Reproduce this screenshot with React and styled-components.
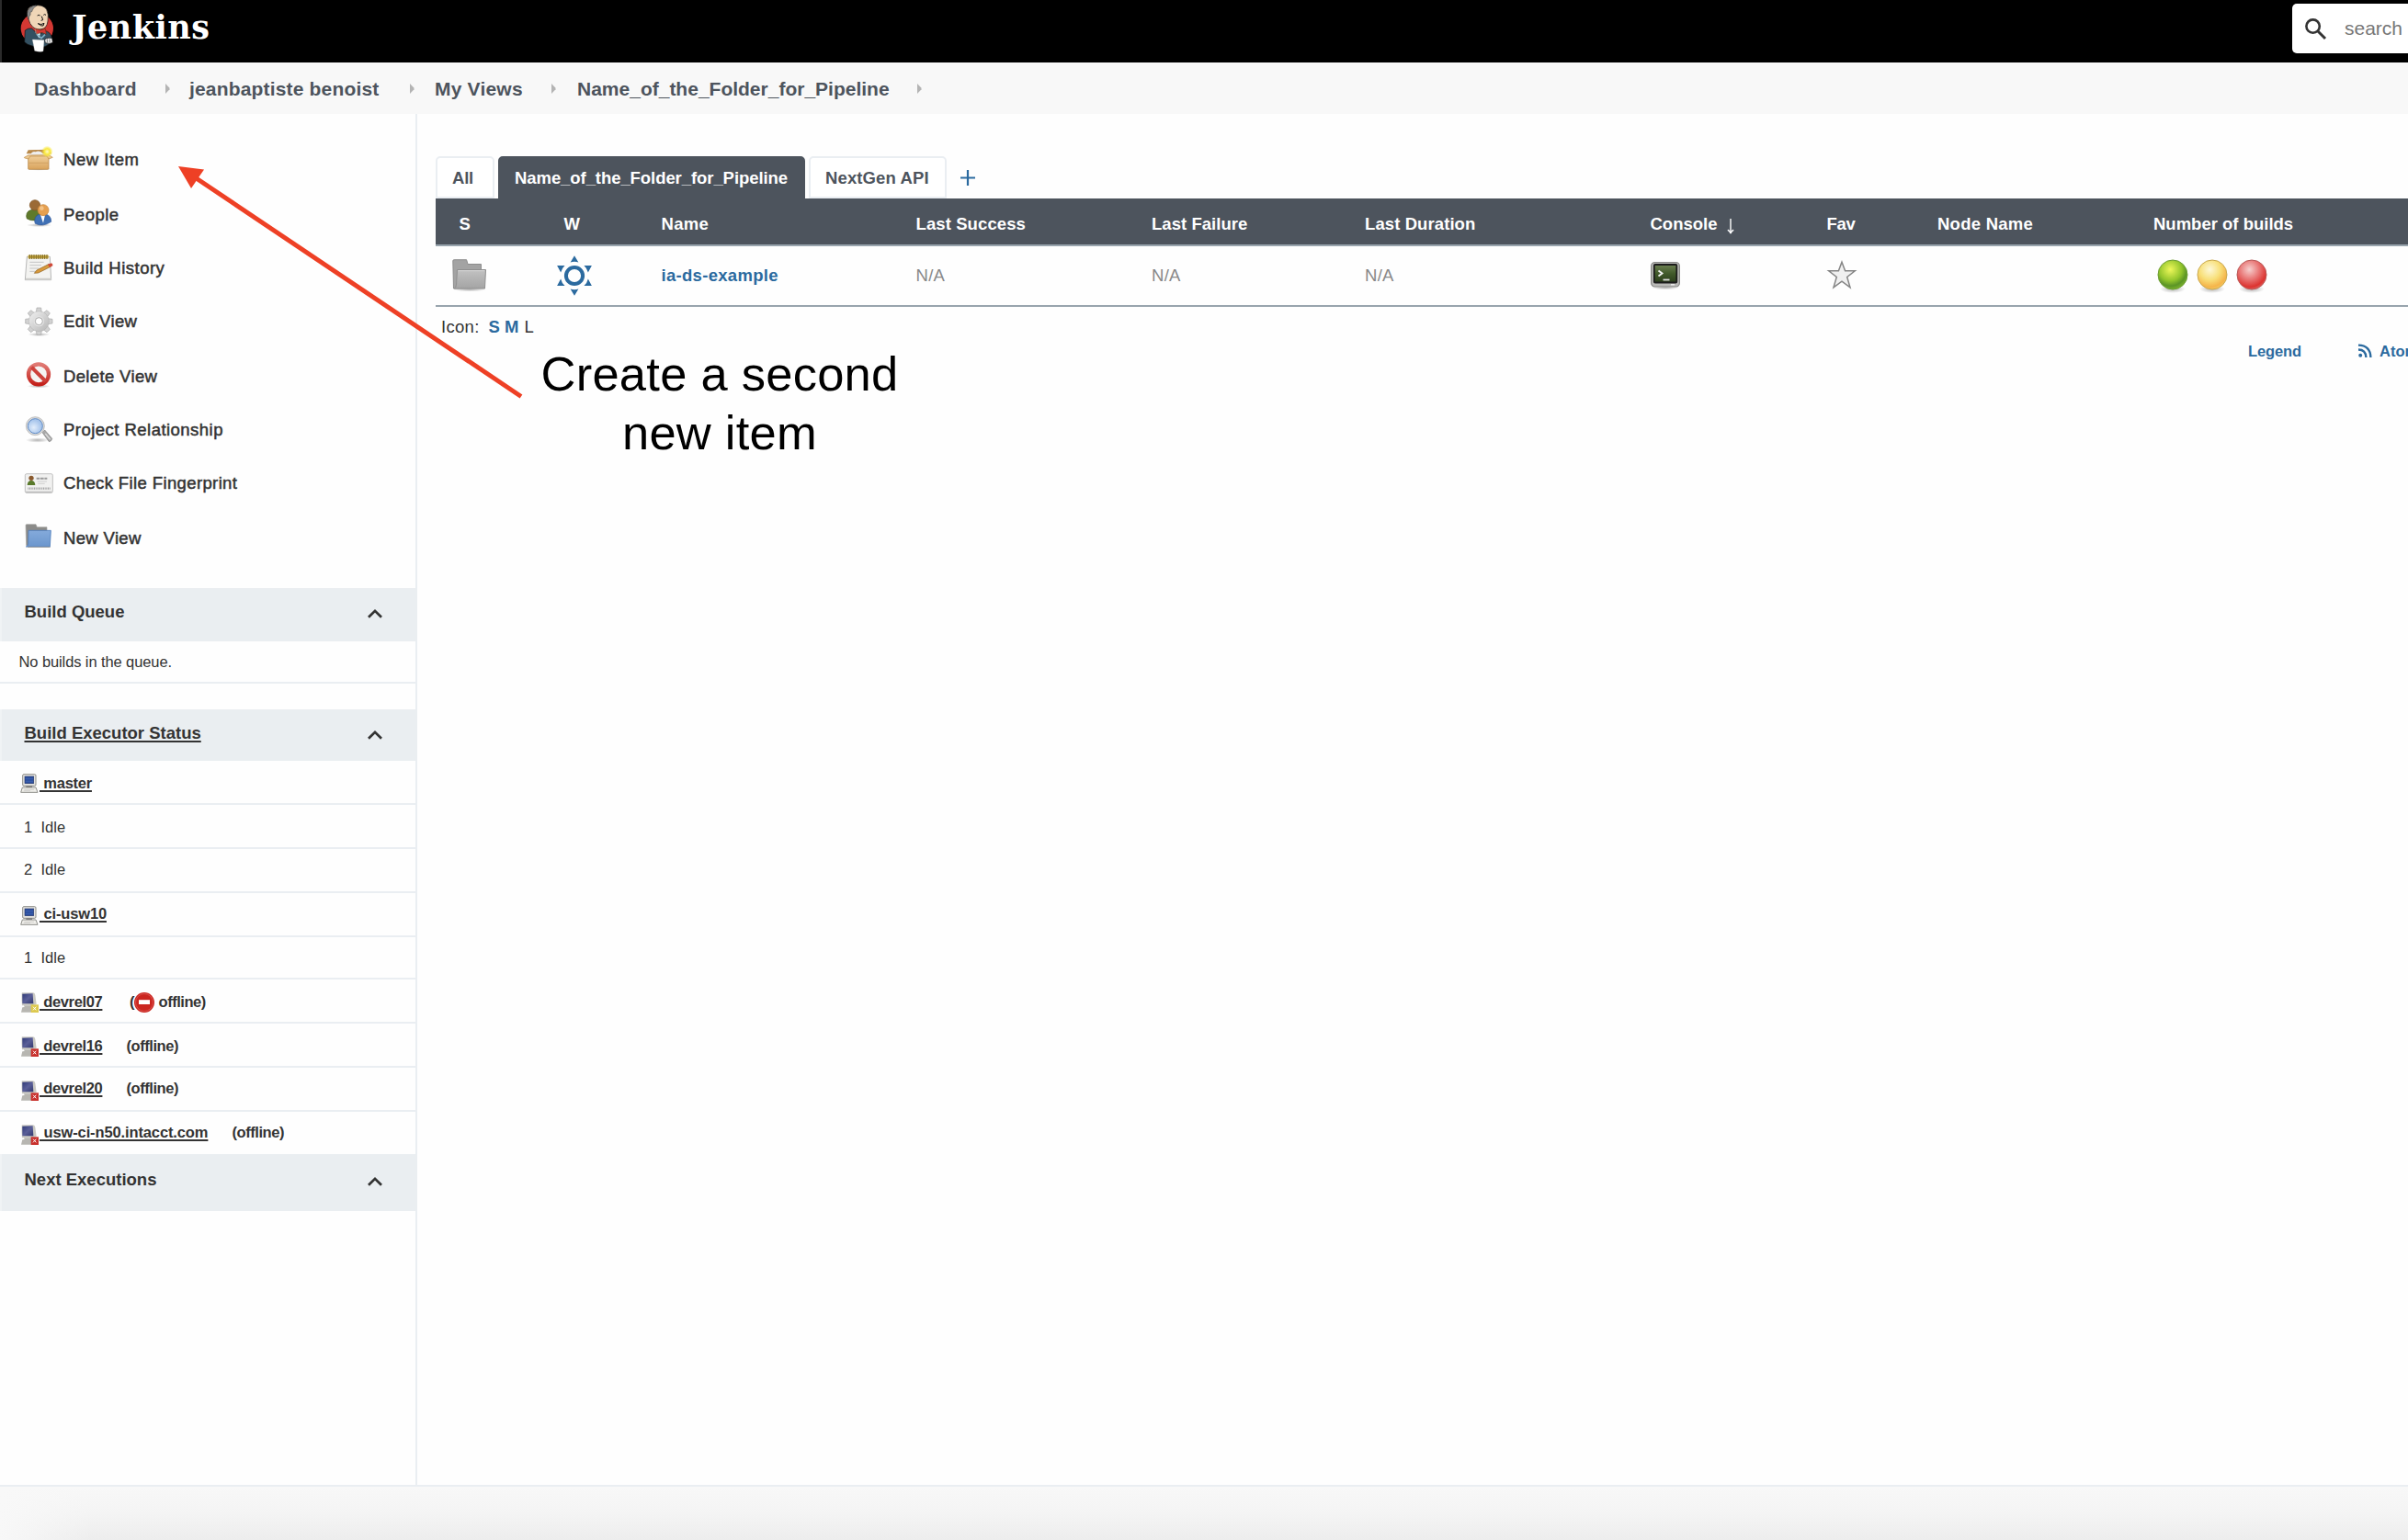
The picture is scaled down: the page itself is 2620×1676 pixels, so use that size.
import React from 'react';
import styled, { createGlobalStyle } from 'styled-components';

const sans = '"Liberation Sans", Arial, sans-serif';
const ink = '#333333';
const slate = '#4d545d';
const link = '#2b6a9f';
const line = '#eaeef2';
const panel = '#eaeef1';
const rule = '#98a4ad';

const Global = createGlobalStyle`
  html, body { margin: 0; background: #fefefe; }
  body { overflow: hidden; font-family: ${sans}; color: ${ink}; }
  * { box-sizing: border-box; }
  svg { display: block; flex: none; overflow: visible; }
`;

const Page = styled.div`
  position: relative;
  width: 2620px;
  height: 1676px;
  overflow: hidden;
  display: flex;
  flex-direction: column;
  background: #fefefe;
`;
const Header = styled.header`
  height: 68px;
  flex: none;
  display: flex;
  justify-content: space-between;
  background: #000;
  border-left: 2px solid #2b2b2b;
`;
const Brand = styled.div`
  display: flex;
  padding: 5px 0 0 20px;
  gap: 18px;
`;
const BrandName = styled.span`
  padding-top: 5px;
  font: bold 35px/40px "DejaVu Serif", serif;
  letter-spacing: ${p => p.$ls || 0}px;
  color: #fff;
`;
const Search = styled.div`
  width: 126px;
  height: 54px;
  margin-top: 4px;
  padding: 16px 0 0 14px;
  display: flex;
  gap: 20px;
  background: #fff;
  border-radius: 5px 0 0 5px;
`;
const SearchText = styled.span`
  font-size: 21px;
  line-height: 22px;
  color: #777;
`;
const Crumbs = styled.nav`
  height: 56px;
  flex: none;
  display: flex;
  align-items: flex-start;
  padding: 17px 0 0 37px;
  background: #f8f8f8;
`;
const Crumb = styled.span`
  width: ${p => p.$w}px;
  flex: none;
  white-space: nowrap;
  font-weight: bold;
  font-size: 21px;
  line-height: 24px;
  letter-spacing: ${p => p.$ls || 0}px;
  color: ${slate};
`;
const CrumbMark = styled.span`
  width: ${p => p.$w}px;
  flex: none;
  padding-top: 6px;
`;
const Body = styled.div`
  flex: 1;
  display: flex;
  min-height: 0;
`;
const Side = styled.aside`
  width: 454px;
  flex: none;
  border-right: 2px solid ${line};
`;
const Tasks = styled.div`
  height: 516px;
  padding: 34px 0 0 26px;
`;
const Task = styled.div`
  height: ${p => p.$h}px;
  display: flex;
  gap: 11px;
`;
const TaskLabel = styled.span`
  padding-top: ${p => p.$drop}px;
  font-size: 18.5px;
  line-height: 20px;
  letter-spacing: ${p => p.$ls || 0}px;
  -webkit-text-stroke: 0.5px ${ink};
  white-space: nowrap;
`;
const PaneHead = styled.div`
  width: 454px;
  height: ${p => p.$h}px;
  padding: ${p => p.$pt}px 38px 0 24.5px;
  display: flex;
  justify-content: space-between;
  align-items: flex-start;
  background: ${panel};
  border-left: 2px solid #f0f3f5;
`;
const PaneTitle = styled.span`
  font-weight: bold;
  font-size: 18.5px;
  line-height: 20px;
  text-decoration: ${p => (p.$u ? 'underline' : 'none')};
  text-decoration-thickness: 2px;
  text-underline-offset: 2px;
`;
const Chevron = styled.span`
  padding-top: 7px;
`;
const Row = styled.div`
  height: ${p => p.$h}px;
  padding-left: ${p => p.$pl || 22}px;
  display: flex;
  border-bottom: ${p => (p.$last ? 'none' : `2px solid ${line}`)};
`;
const RowText = styled.span`
  width: ${p => (p.$w ? `${p.$w}px` : 'auto')};
  margin-left: ${p => p.$ml || 0}px;
  padding-top: ${p => p.$drop}px;
  font-size: 16.5px;
  line-height: 20px;
  letter-spacing: ${p => p.$ls || 0}px;
  font-weight: ${p => (p.$b ? 'bold' : 'normal')};
  white-space: pre;
`;
const NodeLink = styled.a`
  color: ${ink};
  text-decoration: underline;
  text-decoration-thickness: 2px;
  text-underline-offset: 2px;
`;
const RowIcon = styled.span`
  width: 21px;
  flex: none;
  padding-top: 14px;
`;
const Gap = styled.div`
  height: 28px;
`;
const Main = styled.main`
  flex: 1;
  min-width: 0;
  padding: 46px 0 0 20px;
`;
const Tabs = styled.div`
  height: 46px;
  display: flex;
  gap: 4px;
`;
const Tab = styled.div`
  width: ${p => p.$w}px;
  padding: 12px 0 0 16px;
  border: 2px solid ${p => (p.$on ? slate : line)};
  border-radius: 5px 5px 0 0;
  background: ${p => (p.$on ? slate : '#fff')};
  color: ${p => (p.$on ? '#fff' : slate)};
  font-weight: bold;
  font-size: 18.5px;
  line-height: 20px;
  letter-spacing: ${p => p.$ls || 0}px;
  white-space: nowrap;
`;
const AddTab = styled.div`
  padding: 15px 0 0 11px;
`;
const Grid = styled.div`
  display: grid;
  grid-template-columns: 123px 122.500px 277px 256.500px 232px 310.500px 192px 120.500px 235px 1fr;
`;
const HeadRow = styled(Grid)`
  height: 52px;
  padding-top: 18px;
  background: ${slate};
  border-bottom: 2px solid ${rule};
  color: #fff;
  font-weight: bold;
`;
const DataRow = styled(Grid)`
  height: 66px;
  border-bottom: 2px solid ${rule};
`;
const Cell = styled.div`
  display: flex;
  padding-left: ${p => p.$pl || 0}px;
  padding-top: ${p => p.$pt || 0}px;
  gap: ${p => p.$gap || 0}px;
  font-size: 18.5px;
  line-height: 20px;
  letter-spacing: ${p => p.$ls || 0}px;
  font-weight: ${p => (p.$b ? 'bold' : 'inherit')};
  color: ${p => p.$c || 'inherit'};
  white-space: nowrap;
`;
const SortMark = styled.span`
  padding-top: 4px;
`;
const IconSizes = styled.div`
  height: 37px;
  padding: 12px 0 0 6px;
  display: flex;
  font-size: 18.5px;
  line-height: 20px;
`;
const SizeLabel = styled.span`
  width: ${p => p.$w}px;
  letter-spacing: ${p => p.$ls || 0}px;
  font-weight: ${p => (p.$on ? 'bold' : 'normal')};
  color: ${p => (p.$on ? link : ink)};
`;
const Feeds = styled.div`
  display: flex;
  padding: 1px 0 0 1972px;
  font-weight: bold;
  font-size: 16.5px;
  line-height: 20px;
  color: ${link};
`;
const FeedText = styled.span`
  width: ${p => p.$w}px;
  flex: none;
  letter-spacing: ${p => p.$ls || 0}px;
`;
const FeedIcon = styled.span`
  width: 23px;
  flex: none;
  padding-top: 2px;
`;
const Footer = styled.footer`
  height: 60px;
  flex: none;
  border-top: 2px solid ${line};
  background: linear-gradient(to right, #f8f8f8 0, rgba(248, 248, 248, 0) 100px),
    linear-gradient(#f8f8f8, #f4f4f4 50%, #ededed);
`;
const Note = styled.div`
  position: absolute;
  left: 563px;
  top: 375px;
  width: 440px;
  text-align: center;
  color: #000;
  font-size: 52.500px;
  line-height: 64px;
  letter-spacing: 0.25px;
`;
const Arrow = styled.svg`
  position: absolute;
  left: 0;
  top: 0;
`;
const Paints = styled.svg`
  position: absolute;
`;

const Butler = () => (
  <svg width="38" height="54" viewBox="66 14 114 162">
    <ellipse cx="121" cy="92" rx="53" ry="50" fill="#d33833" />
    <path d="M82 98q10-8 22-6l14 14 16 2 14-8q14 2 20 18l4 16-20 14-8 4-36-2-18-6-10-8z" fill="#335061" stroke="#111" strokeWidth="2" />
    <path d="M90 44q-4-22 20-26 30-6 42 12 8 16 4 38-3 24-21 26-16 4-27-6-12-12-14-24z" fill="#f0d6b7" stroke="#111" strokeWidth="2" />
    <path d="M92 62q-8-22 4-36 14-12 24-9-14 8-16 20l-5 2q2 12-3 12z" fill="#8c8c8c" stroke="#333" strokeWidth="1.500" />
    <path d="M122 50q5-4 9 0M142 48q4-4 8 0M136 52l4 12-6 2M124 76q10 6 20-1l-3 8q-8 1-11-3z" fill="none" stroke="#111" strokeWidth="3" />
    <path d="M116 94l16 10-4 20-12-18z" fill="#fff" />
    <path d="M117 92l15 6 16-6 3 19-16-6-16 6z" fill="#d33833" stroke="#531" strokeWidth="1.500" />
    <path d="M120 110l15 14 12-12" fill="none" stroke="#81b0c4" strokeWidth="5" />
    <path d="M106 128l38 2-3 36q-12 4-28-1z" fill="#fff" stroke="#ccc" strokeWidth="1" />
    <path d="M146 128q8-8 24-4l2 14q-8 6-24 1z" fill="#eee" stroke="#111" strokeWidth="2" />
    <path d="M154 126v12M162 126v12" stroke="#444" strokeWidth="2" />
  </svg>
);
const SearchIcon = () => (
  <svg width="23" height="23" viewBox="0 0 23 23" fill="none" stroke="#333" strokeWidth="2.600">
    <circle cx="8.600" cy="8.600" r="7.200" />
    <path d="M14 14l8 8" strokeWidth="3" />
  </svg>
);
const Mark = () => (
  <svg width="5" height="11" viewBox="0 0 5 11"><path d="M0 0l4.500 4.700v1.600L0 11z" fill="#b4b4b4" /></svg>
);
const Up = () => (
  <svg width="16" height="10" viewBox="0 0 16 10"><path d="M1 8.800L8 1.800l7 7" fill="none" stroke="#333" strokeWidth="2.700" /></svg>
);

const Defs = () => (
  <Paints width="0" height="0">
    <defs>
      <linearGradient id="box" x2="0" y2="1"><stop stopColor="#f0cf9b" /><stop offset="1" stopColor="#d9a35c" /></linearGradient>
      <linearGradient id="gray" x2="1" y2="1"><stop stopColor="#f2f2f2" /><stop offset="1" stopColor="#b5b5b5" /></linearGradient>
      <linearGradient id="fold" x2="0" y2="1"><stop stopColor="#c2c2c2" /><stop offset="1" stopColor="#a4a4a4" /></linearGradient>
      <linearGradient id="blue" x2="0" y2="1"><stop stopColor="#84aadb" /><stop offset="1" stopColor="#6b96cd" /></linearGradient>
      <linearGradient id="red" x2="0" y2="1"><stop stopColor="#e07a74" /><stop offset="1" stopColor="#c4211b" /></linearGradient>
      <linearGradient id="scr" x2="1" y2="1"><stop stopColor="#2f3a78" /><stop offset=".5" stopColor="#5a5f98" /><stop offset="1" stopColor="#32386e" /></linearGradient>
      <linearGradient id="term" x2="0" y2="1"><stop stopColor="#6d8052" /><stop offset=".5" stopColor="#415a2a" /><stop offset="1" stopColor="#2b3d1c" /></linearGradient>
      <radialGradient id="sun"><stop stopColor="#fffbd0" /><stop offset=".5" stopColor="#f9e83c" /><stop offset="1" stopColor="#f9e83c" stopOpacity="0" /></radialGradient>
      <radialGradient id="glow"><stop stopColor="#000" stopOpacity=".3" /><stop offset="1" stopColor="#000" stopOpacity="0" /></radialGradient>
      <radialGradient id="lens" cx=".4" cy=".6"><stop stopColor="#e3eefb" /><stop offset="1" stopColor="#a9c6ec" /></radialGradient>
      <radialGradient id="g" cx=".42" cy=".32" r=".7"><stop stopColor="#eef75a" /><stop offset=".55" stopColor="#93c52c" /><stop offset=".8" stopColor="#5b9426" /><stop offset="1" stopColor="#7db52a" /></radialGradient>
      <radialGradient id="y" cx=".42" cy=".32" r=".7"><stop stopColor="#fdf8d8" /><stop offset=".5" stopColor="#f8e07a" /><stop offset=".85" stopColor="#f5b44a" /><stop offset="1" stopColor="#f4c860" /></radialGradient>
      <radialGradient id="r" cx=".42" cy=".32" r=".7"><stop stopColor="#f6cfce" /><stop offset=".5" stopColor="#e87372" /><stop offset=".85" stopColor="#dc3330" /><stop offset="1" stopColor="#e0605c" /></radialGradient>
    </defs>
  </Paints>
);

const frame = { width: 32, height: 32 };
const NewItemIcon = () => (
  <svg {...frame} viewBox="78 474 96 96">
    <ellipse cx="126" cy="552" rx="42" ry="5" fill="url(#glow)" />
    <path d="M92 490l66-2 10 14H86z" fill="#b98a4c" />
    <path d="M102 500q6-8 14-4 12-6 24 4v8h-38z" fill="#eee" />
    <path d="M92 508h67v42q0 3-3 3H95q-3 0-3-3z" fill="url(#box)" stroke="#b27d3a" strokeWidth="2" />
    <path d="M92 507l-13 7q0 2 2 2l12 3 6-9h54l6 9 13-5-12-8z" fill="#ecc890" stroke="#c08f4d" strokeWidth="2" />
    <path d="M94 532h63" stroke="#c99a5c" strokeWidth="2" />
    <circle cx="154" cy="495" r="19" fill="url(#sun)" />
  </svg>
);
const PeopleIcon = () => (
  <svg {...frame} viewBox="78 648 96 96">
    <ellipse cx="128" cy="735" rx="42" ry="6" fill="url(#glow)" />
    <path d="M86 706q0-22 27-22t27 24q-26 20-52 6z" fill="#5f7a2b" stroke="#435719" strokeWidth="2" />
    <circle cx="114" cy="670" r="17" fill="#9b6a35" stroke="#7c5223" strokeWidth="2" />
    <path d="M113 722q0-24 27-24t27 26q-26 18-52 6z" fill="#3f70b5" stroke="#2a5395" strokeWidth="2" />
    <path d="M132 702h15l-6 26z" fill="#fff" />
    <circle cx="141" cy="686" r="18" fill="#e6a050" stroke="#c37f33" strokeWidth="2" />
    <circle cx="136" cy="680" r="7" fill="#f3c286" />
  </svg>
);
const HistoryIcon = () => (
  <svg {...frame} viewBox="78 825 96 96">
    <path d="M88 838h75l4 76H82z" fill="#f3f3f1" stroke="#aaa" strokeWidth="2.500" />
    <path d="M84 908h83v7H83z" fill="#cdcdcb" />
    <path d="M92 833h66v11H92z" fill="#c6a63a" />
    <path d="M97 831v15M104 831v15M111 831v15M118 831v15M125 831v15M132 831v15M139 831v15M146 831v15M153 831v15" stroke="#7d6a2a" strokeWidth="3" />
    <path d="M97 856h46M97 866h38M97 876h30M97 886h20" stroke="#c4c4c4" strokeWidth="3" />
    <path d="M112 892l8-10 40-20 5 9-40 20z" fill="#d99a3c" stroke="#8a5d1d" strokeWidth="2" />
    <path d="M156 863l12-4q6 4 4 9l-10 5z" fill="#cf4a3a" />
  </svg>
);
const GearIcon = () => (
  <svg {...frame} viewBox="78 40 96 96">
    <ellipse cx="127" cy="130" rx="36" ry="6" fill="url(#glow)" />
    <g fill="#d2d2d2" stroke="#a9a9a9" strokeWidth="2">
      {[0, 45, 90, 135, 180, 225, 270, 315].map(a => (
        <path key={a} transform={`rotate(${a} 127 87)`} d="M118 58l2-15h14l2 15z" />
      ))}
    </g>
    <circle cx="127" cy="87" r="33" fill="url(#gray)" stroke="#b0b0b0" strokeWidth="1.500" />
    <circle cx="127" cy="87" r="17" fill="#e2e2e2" />
    <circle cx="127" cy="87" r="12" fill="#fff" stroke="#aaa" strokeWidth="3" />
  </svg>
);
const DeleteIcon = () => (
  <svg {...frame} viewBox="78 216 96 96">
    <ellipse cx="126" cy="301" rx="38" ry="6" fill="url(#glow)" />
    <circle cx="126" cy="262" r="33" fill="#f5f3f2" stroke="url(#red)" strokeWidth="13" />
    <path d="M103 239l46 46" stroke="#cd413b" strokeWidth="12" />
  </svg>
);
const LensIcon = () => (
  <svg {...frame} viewBox="78 393 96 96">
    <ellipse cx="122" cy="477" rx="38" ry="8" fill="url(#glow)" />
    <path d="M138 452l8-8 24 28q-2 10-10 10z" fill="#a9a9a9" stroke="#828282" strokeWidth="2" />
    <path d="M148 456l16 19" stroke="#dedede" strokeWidth="4" />
    <circle cx="115" cy="431" r="30" fill="#dcdcdc" stroke="#a8a8a8" strokeWidth="2" />
    <circle cx="115" cy="431" r="24" fill="url(#lens)" stroke="#5f8bc6" strokeWidth="3" />
  </svg>
);
const CardIcon = () => (
  <svg {...frame} viewBox="78 570 96 96">
    <rect x="82" y="587" width="90" height="62" rx="5" fill="#f1f1f0" stroke="#b5b5b5" strokeWidth="2.500" />
    <path d="M84 644h86v5H84z" fill="#c2c2c2" />
    <circle cx="102" cy="601" r="8" fill="#8a5a2e" />
    <path d="M89 624q1-15 13-15t13 15z" fill="#5a7a2c" />
    <path d="M119 602h35" stroke="#9b9b9b" strokeWidth="6" strokeDasharray="11 2" />
    <path d="M122 612h31M124 619h22" stroke="#cfcfcf" strokeWidth="3" />
    <path d="M91 635h75" stroke="#a6a6a6" strokeWidth="7" strokeDasharray="3 2" />
  </svg>
);
const FolderIcon = () => (
  <svg {...frame} viewBox="78 744 96 96">
    <path d="M84 755q0-3 3-3h30l4 9h32v60H86z" fill="#8b8b89" stroke="#a2a2a0" strokeWidth="2" />
    <path d="M93 772h73l-3 53H85q6-1 7-10z" fill="url(#blue)" stroke="#4d7cba" strokeWidth="2.500" />
    <path d="M90 826h74" stroke="#999" strokeWidth="3" />
  </svg>
);

const Computer = () => (
  <svg width="20" height="21" viewBox="65 635 60 63">
    <rect x="73" y="637" width="43" height="38" rx="4" fill="#e4e3df" stroke="#8f8f8a" strokeWidth="3" />
    <rect x="80" y="644" width="29" height="23" fill="#2d50a0" stroke="#26386e" strokeWidth="2" />
    <path d="M82 652h25M82 660h25" stroke="#4a70b8" strokeWidth="1.500" />
    <path d="M84 675h20v5H84z" fill="#777" />
    <path d="M72 680h44l6 16H67z" fill="#efeeea" stroke="#8f8f8a" strokeWidth="3" />
    <path d="M78 687h32M76 691h22" stroke="#c4c4bf" strokeWidth="2" />
  </svg>
);
const Offline = ({ color }) => (
  <svg width="20" height="22" viewBox="66 360 60 66">
    <path d="M72 361h36q6 0 7 8l4 30-12 4H72q-2-20-1-40z" fill="#c9c8c2" />
    <path d="M73 365l34-1 2 33H73z" fill="url(#scr)" />
    <path d="M78 403h26l-2 8 8 14H69l4-16 7-1z" fill="#b7b6b1" />
    <rect x="101" y="400" width="25" height="26" fill={color} />
    <path d="M108 407l10 11M118 407l-10 11" stroke="#fff" strokeWidth="3" />
  </svg>
);
const Stop = () => (
  <svg width="22" height="22" viewBox="0 0 22 22">
    <circle cx="11" cy="11" r="11" fill="#cb2620" />
    <circle cx="11" cy="11" r="9.500" fill="none" stroke="#dc5b56" strokeWidth=".8" />
    <rect x="5" y="8.200" width="12" height="4.800" fill="#fff" />
  </svg>
);
const JobFolder = () => (
  <svg width="38" height="36" viewBox="0 0 38 36">
    <ellipse cx="19" cy="33" rx="18" ry="2.500" fill="url(#glow)" />
    <path d="M.8 2q0-1.300 1.300-1.300h13.500L17 5.500h14.500V14L30 31.500 1.500 32z" fill="#a3a3a3" stroke="#8d8d8d" />
    <path d="M5.500 11.500h31L35.500 32H2.300q2-1 2.300-5z" fill="url(#fold)" stroke="#8f8f8f" />
    <path d="M6.500 12.700H35" stroke="#d6d6d6" />
  </svg>
);
const Weather = () => (
  <svg width="38" height="44" viewBox="-19 -22 38 44">
    <circle r="9.100" fill="none" stroke={link} strokeWidth="4" />
    {[0, 60, 120, 180, 240, 300].map(a => (
      <path key={a} transform={`rotate(${a})`} d="M0-21.800L4.400-14.600Q0-16-4.400-14.600z" fill={link} />
    ))}
  </svg>
);
const Terminal = () => (
  <svg width="32" height="32" viewBox="0 0 32 32">
    <ellipse cx="16" cy="29" rx="15" ry="2.500" fill="url(#glow)" />
    <rect x=".6" y="1.500" width="30.800" height="26.500" rx="4" fill="#b9b9b7" stroke="#8a8a88" strokeWidth="1.200" />
    <rect x="3.800" y="4" width="24.500" height="19.500" rx="1" fill="url(#term)" stroke="#1c1c1c" strokeWidth="1.800" />
    <path d="M8.500 10.500l4 3-4 3" fill="none" stroke="#f2f2f2" strokeWidth="1.900" />
    <path d="M13.500 20.500h7" stroke="#ddd" strokeWidth="1.800" />
    <path d="M22 25.800h4" stroke="#eee" strokeWidth="1.400" />
  </svg>
);
const Star = () => (
  <svg width="32" height="32" viewBox="0 0 32 32">
    <path d="M16 2.200l3.600 9.600h10.700l-8.600 6.700 3.300 11.300-9-6.600-9 6.600 3.300-11.300L1.700 11.800h10.700z" fill="#f0f0f0" stroke="#858585" strokeWidth="1.500" />
  </svg>
);
const Ball = ({ id, edge }) => (
  <svg width="34" height="38" viewBox="0 0 34 38">
    <ellipse cx="17" cy="32.500" rx="14" ry="4.500" fill="url(#glow)" />
    <circle cx="17" cy="17" r="16" fill={`url(#${id})`} stroke={edge} strokeWidth="1" />
  </svg>
);
const Plus = () => (
  <svg width="16" height="17" viewBox="0 0 16 17"><path d="M8 0v17M0 8.500h16" stroke={link} strokeWidth="2.200" /></svg>
);
const Down = () => (
  <svg width="8" height="17" viewBox="0 0 8 17" fill="none" stroke="#fff">
    <path d="M4 0v15.500" strokeWidth="1.400" />
    <path d="M.8 12.200Q3.400 13.200 4 16.200q.6-3 3.200-4" strokeWidth="1.500" />
  </svg>
);
const Rss = () => (
  <svg width="15" height="15" viewBox="0 0 15 15" fill="none" stroke={link} strokeWidth="2.300">
    <circle cx="2.200" cy="12.800" r="2" fill={link} stroke="none" />
    <path d="M0 6.500q8 0 8.400 8.500M0 1.700q13 .3 13.400 13.300" />
  </svg>
);

const tasks = [
  ['New Item', NewItemIcon, 58, 6, 0.55],
  ['People', PeopleIcon, 59, 8, 0.5],
  ['Build History', HistoryIcon, 59, 7, 0.5],
  ['Edit View', GearIcon, 58, 6, 0.4],
  ['Delete View', DeleteIcon, 59, 8, 0.35],
  ['Project Relationship', LensIcon, 59, 7, 0.47],
  ['Check File Fingerprint', CardIcon, 58, 6, 0.38],
  ['New View', FolderIcon, 58, 8, 0.35],
];
const crumbs = [
  ['Dashboard', 143, 26, 0.25],
  ['jeanbaptiste benoist', 240, 27, 0.17],
  ['My Views', 127, 28, 0.2],
  ['Name_of_the_Folder_for_Pipeline', 370, 27, 0],
];
const red = '#c8302c';
const gray = '#888';

export default function App() {
  return (
    <>
      <Global />
      <Page>
        <Defs />
        <Header>
          <Brand><Butler /><BrandName $ls={0.5}>Jenkins</BrandName></Brand>
          <Search><SearchIcon /><SearchText>search</SearchText></Search>
        </Header>
        <Crumbs>
          {crumbs.map(([t, w, g, ls]) => (
            <React.Fragment key={t}>
              <Crumb $w={w} $ls={ls}>{t}</Crumb>
              <CrumbMark $w={g}><Mark /></CrumbMark>
            </React.Fragment>
          ))}
        </Crumbs>
        <Body>
          <Side>
            <Tasks>
              {tasks.map(([t, Icon, h, drop, ls]) => (
                <Task key={t} $h={h}><Icon /><TaskLabel $drop={drop} $ls={ls}>{t}</TaskLabel></Task>
              ))}
            </Tasks>
            <PaneHead $h={58} $pt={16}><PaneTitle>Build Queue</PaneTitle><Chevron><Up /></Chevron></PaneHead>
            <Row $h={46} $pl={20.500}><RowText $drop={12} $ls={-0.1}>No builds in the queue.</RowText></Row>
            <Gap />
            <PaneHead $h={56} $pt={16}><PaneTitle $u>Build Executor Status</PaneTitle><Chevron><Up /></Chevron></PaneHead>
            <Row $h={48}><RowIcon><Computer /></RowIcon><RowText $drop={14} $b $ls={-0.25}><NodeLink> master</NodeLink></RowText></Row>
            <Row $h={48} $pl={26}><RowText $drop={14} $w={18.500}>1</RowText><RowText $drop={14}>Idle</RowText></Row>
            <Row $h={48} $pl={26}><RowText $drop={12} $w={18.500}>2</RowText><RowText $drop={12}>Idle</RowText></Row>
            <Row $h={48}><RowIcon><Computer /></RowIcon><RowText $drop={12} $b $ls={-0.15}><NodeLink> ci-usw10</NodeLink></RowText></Row>
            <Row $h={46} $pl={26}><RowText $drop={12} $w={18.500}>1</RowText><RowText $drop={12}>Idle</RowText></Row>
            <Row $h={48}>
              <RowIcon><Offline color="#ddc94e" /></RowIcon>
              <RowText $drop={14} $b $w={98} $ls={-0.35}><NodeLink> devrel07</NodeLink></RowText>
              <RowText $drop={14} $b $w={5}>(</RowText>
              <RowIcon><Stop /></RowIcon>
              <RowText $drop={14} $b $ml={5.500} $ls={-0.45}>offline)</RowText>
            </Row>
            <Row $h={48}><RowIcon><Offline color={red} /></RowIcon><RowText $drop={14} $b $w={94.500} $ls={-0.35}><NodeLink> devrel16</NodeLink></RowText><RowText $drop={14} $b $ls={-0.45}>(offline)</RowText></Row>
            <Row $h={48}><RowIcon><Offline color={red} /></RowIcon><RowText $drop={12} $b $w={94.500} $ls={-0.35}><NodeLink> devrel20</NodeLink></RowText><RowText $drop={12} $b $ls={-0.45}>(offline)</RowText></Row>
            <Row $h={46} $last><RowIcon><Offline color={red} /></RowIcon><RowText $drop={12} $b $w={209.500} $ls={-0.12}><NodeLink> usw-ci-n50.intacct.com</NodeLink></RowText><RowText $drop={12} $b $ls={-0.45}>(offline)</RowText></Row>
            <PaneHead $h={62} $pt={18}><PaneTitle>Next Executions</PaneTitle><Chevron><Up /></Chevron></PaneHead>
          </Side>
          <Main>
            <Tabs>
              <Tab $w={64} $ls={-0.2}>All</Tab>
              <Tab $w={334} $on $ls={-0.07}>Name_of_the_Folder_for_Pipeline</Tab>
              <Tab $w={150} $ls={0.12}>NextGen API</Tab>
              <AddTab><Plus /></AddTab>
            </Tabs>
            <HeadRow>
              <Cell $pl={25.500}>S</Cell>
              <Cell $pl={16.500}>W</Cell>
              <Cell $ls={0.3}>Name</Cell>
              <Cell $ls={0.1}>Last Success</Cell>
              <Cell $ls={0.05}>Last Failure</Cell>
              <Cell $ls={0.09}>Last Duration</Cell>
              <Cell $gap={11}>Console<SortMark><Down /></SortMark></Cell>
              <Cell $ls={-0.3}>Fav</Cell>
              <Cell $ls={0.25}>Node Name</Cell>
              <Cell>Number of builds</Cell>
            </HeadRow>
            <DataRow>
              <Cell $pl={18} $pt={14}><JobFolder /></Cell>
              <Cell $pl={9} $pt={10}><Weather /></Cell>
              <Cell $pt={22} $b $c={link} $ls={0.3}>ia-ds-example</Cell>
              <Cell $pt={22} $c={gray} $ls={0.3}>N/A</Cell>
              <Cell $pt={22} $c={gray} $ls={0.3}>N/A</Cell>
              <Cell $pt={22} $c={gray} $ls={0.3}>N/A</Cell>
              <Cell $pt={16}><Terminal /></Cell>
              <Cell $pt={15}><Star /></Cell>
              <Cell />
              <Cell $pl={4} $pt={14} $gap={9}><Ball id="g" edge="#6f9e35" /><Ball id="y" edge="#c9a94f" /><Ball id="r" edge="#b85a58" /></Cell>
            </DataRow>
            <IconSizes>
              <SizeLabel $w={51.500} $ls={0.3}>Icon:</SizeLabel>
              <SizeLabel $w={17.500} $on>S</SizeLabel>
              <SizeLabel $w={21.500} $on>M</SizeLabel>
              <SizeLabel $w={14}>L</SizeLabel>
            </IconSizes>
            <Feeds>
              <FeedText $w={120} $ls={-0.1}>Legend</FeedText>
              <FeedIcon><Rss /></FeedIcon>
              <FeedText $w={60}>Atom</FeedText>
            </Feeds>
          </Main>
        </Body>
        <Footer />
        <Note>Create a second<br />new item</Note>
        <Arrow width="620" height="460" viewBox="0 0 620 460">
          <path d="M567 431.500L212 193" stroke="#ee4025" strokeWidth="5" fill="none" />
          <path d="M194 181l28 3.500L208 205z" fill="#ee4025" />
        </Arrow>
      </Page>
    </>
  );
}
